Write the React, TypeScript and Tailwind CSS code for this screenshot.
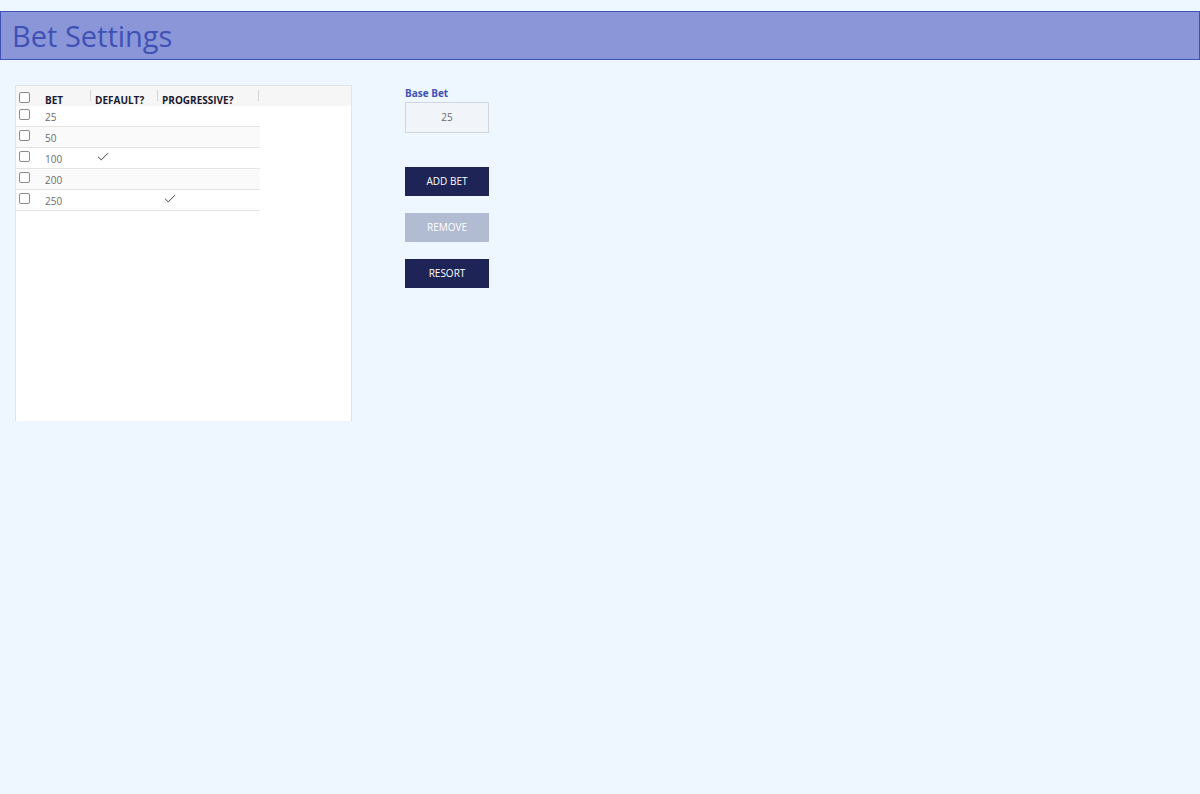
import { Check } from "lucide-react";

type Row = { bet: number; isDefault: boolean; progressive: boolean };

const rows: Row[] = [
  { bet: 25, isDefault: false, progressive: false },
  { bet: 50, isDefault: false, progressive: false },
  { bet: 100, isDefault: true, progressive: false },
  { bet: 200, isDefault: false, progressive: false },
  { bet: 250, isDefault: false, progressive: true },
];

const Box = () => (
  <span className="block h-[11px] w-[11px] rounded-[2px] border border-[#8a8a8a] bg-white" />
);

const Sep = () => <span className="h-[11px] w-px bg-[#d6d6d6]" />;

const App = () => {
  return (
    <div className="min-h-[794px] bg-[#eef6ff] pt-[11px] font-['Open_Sans',sans-serif]">
      <header className="flex h-[49px] items-center border border-[#3f51b5] bg-[#8a96d8] pl-[11px]">
        <h1 className="text-[29px] leading-none text-[#3f51b5]">Bet Settings</h1>
      </header>

      <main className="flex gap-[53px] pl-[15px] pt-[25px]">
        <section className="h-[336px] w-[337px] border-l border-r border-t border-[#e2e2e2] bg-white">
          <div className="flex h-[20px] w-full items-start bg-[#f6f6f6] pt-[4px] text-[10px] font-bold text-[#1a1a2e]">
            <div className="flex w-[29px] pl-[3px] pt-[2px]">
              <Box />
            </div>
            <div className="flex w-[46px] items-start justify-between">
              <span className="pt-[3px]">BET</span>
              <Sep />
            </div>
            <div className="flex w-[67px] items-start justify-between pl-[4px]">
              <span className="pt-[3px]">DEFAULT?</span>
              <Sep />
            </div>
            <div className="flex w-[101px] items-start justify-between pl-[4px]">
              <span className="pt-[3px]">PROGRESSIVE?</span>
              <Sep />
            </div>
          </div>
          <div className="w-[244px]">
            {rows.map((r, i) => (
              <div
                key={r.bet}
                className={`flex h-[21px] items-center border-b border-[#e4e4e4] text-[10px] text-[#6b6b6b] ${
                  i % 2 === 1 ? "bg-[#fafafa]" : "bg-white"
                }`}
              >
                <div className="flex w-[29px] pb-[3px] pl-[3px]">
                  <Box />
                </div>
                <div className="w-[46px] pt-[2px]">{r.bet}</div>
                <div className="w-[67px] pb-[3px] pl-[5px]">
                  {r.isDefault && <Check size={14} strokeWidth={1.6} className="text-[#333]" />}
                </div>
                <div className="w-[101px] pb-[3px] pl-[5px]">
                  {r.progressive && <Check size={14} strokeWidth={1.6} className="text-[#333]" />}
                </div>
              </div>
            ))}
          </div>
        </section>

        <aside className="flex w-[84px] flex-col pt-[2px]">
          <label className="text-[10px] font-bold leading-[13px] text-[#3f51b5]">Base Bet</label>
          <div className="mt-[2px] flex h-[31px] items-center justify-center border border-[#cfd6de] bg-[#f1f4f8] text-[10px] text-[#6b6b6b]">
            25
          </div>
          <button className="mt-[34px] h-[29px] bg-[#1e2556] text-[10px] text-white">ADD BET</button>
          <button className="mt-[17px] h-[29px] bg-[#b1bbd1] text-[10px] text-white">REMOVE</button>
          <button className="mt-[17px] h-[29px] bg-[#1e2556] text-[10px] text-white">RESORT</button>
        </aside>
      </main>
    </div>
  );
};

export default App;
